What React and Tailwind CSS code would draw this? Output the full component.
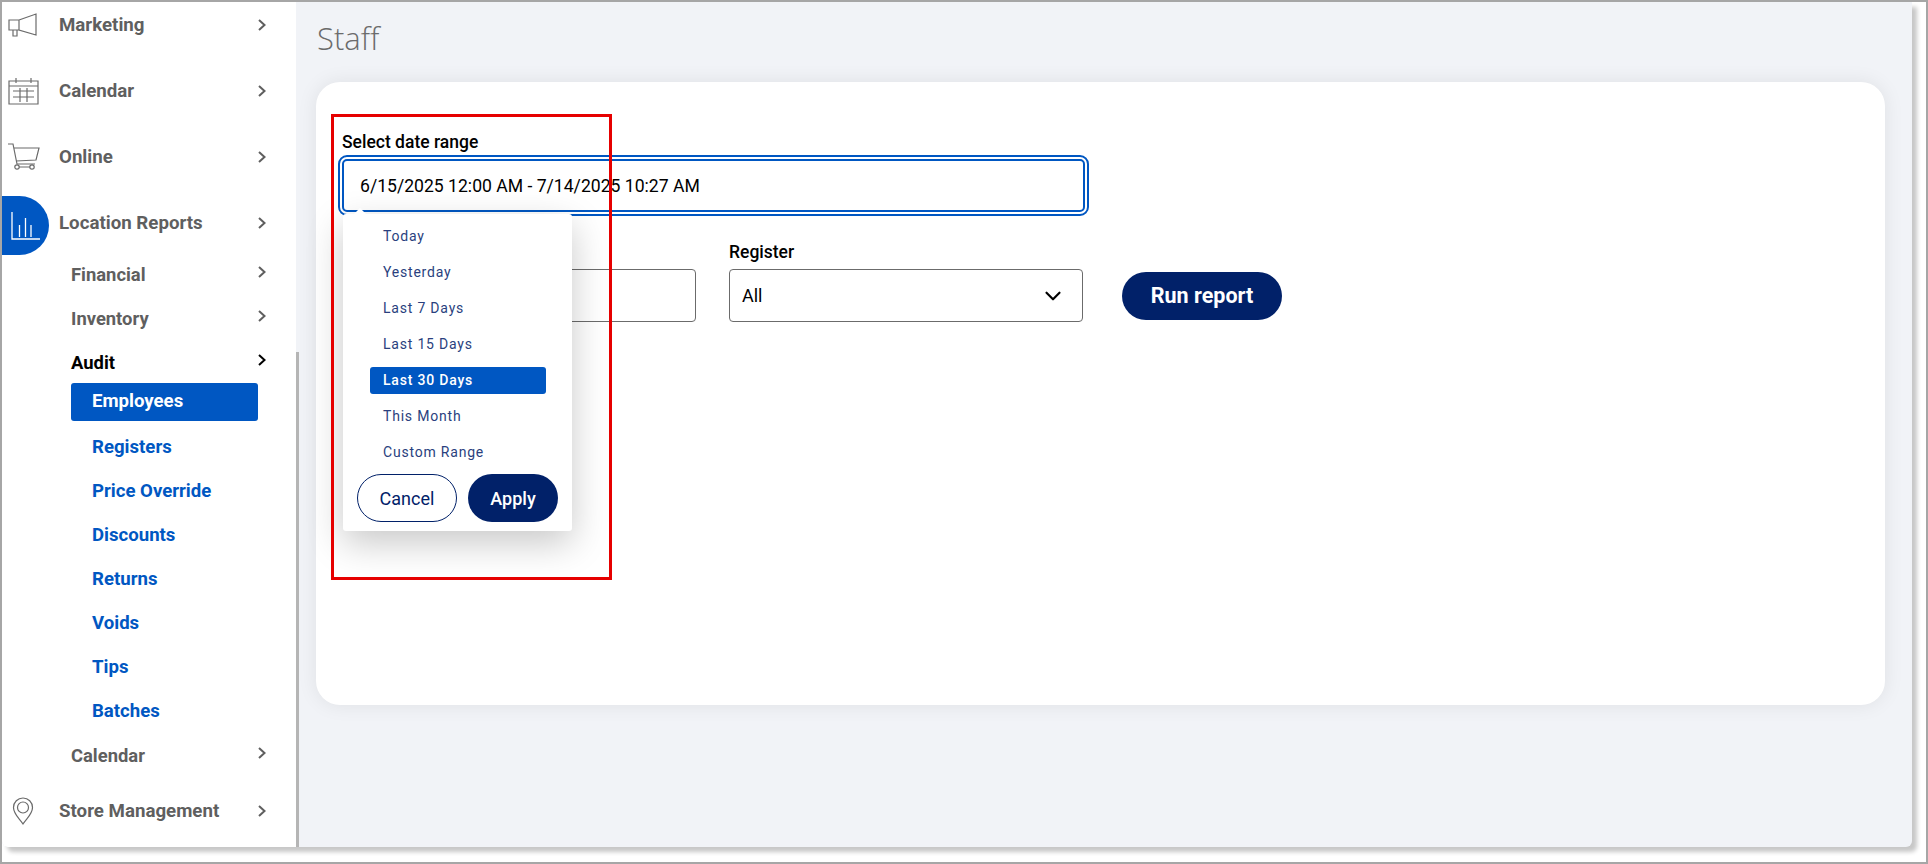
import { ChevronDown } from "lucide-react";

const Chevron = ({ className = "text-[#5f5f5f]" }) => (
  <svg width="10" height="14" viewBox="0 0 10 14" fill="none" className={className}>
    <path d="M2 2l5.500 5-5.500 5" stroke="currentColor" strokeWidth="2" />
  </svg>
);

const MegaphoneIcon = () => (
  <svg width="32" height="28" viewBox="0 0 32 28" fill="none" stroke="#6b6b6b" strokeWidth="1.2">
    <path d="M1 9h10v10H1zM11 9l17-6v21l-17-5zM5 19v6h4v-6" />
  </svg>
);

const CalendarIcon = () => (
  <svg width="32" height="28" viewBox="0 0 32 28" fill="none" stroke="#6b6b6b" strokeWidth="1.2">
    <path d="M1 4h29v23H1zM1 9h29M8 1v5M23 1v5M5 14h21M5 20h21M12 11v14M19 11v14" />
  </svg>
);

const CartIcon = () => (
  <svg width="32" height="28" viewBox="0 0 32 28" fill="none" stroke="#6b6b6b" strokeWidth="1.2">
    <path d="M0 1h5l4 20h18M6 5h25l-3 12-20 1" />
    <circle cx="9" cy="24" r="2.200" />
    <circle cx="24" cy="24" r="2.200" />
    <path d="M11 24h11" />
  </svg>
);

const ChartIcon = () => (
  <svg width="32" height="30" viewBox="0 0 32 30" fill="none" stroke="#fff" strokeWidth="1.3">
    <path d="M2 1v27h28M9.500 14v12M15.500 7v19M21 14v12" />
  </svg>
);

const PinIcon = () => (
  <svg width="22" height="28" viewBox="0 0 22 28" fill="none" stroke="#6b6b6b" strokeWidth="1.2" className="-ml-[3px]">
    <path d="M11 27C7 21 1.500 17 1.500 10.500a9.500 9.500 0 0 1 19 0C20.500 17 15 21 11 27z" />
    <circle cx="11" cy="10.500" r="5.500" />
  </svg>
);

const MainRow = ({ icon, label, active }) => (
  <div className="flex h-[66px] items-center pr-[29px]">
    <div
      className={`flex h-[59px] w-[47px] items-center justify-center rounded-r-full ${
        active ? "mt-[5px] bg-[#0057c2]" : "pr-[3px]"
      }`}
    >
      {icon}
    </div>
    <span className="ml-[10px] flex-1 text-[18.7px] font-bold text-[#5f5f5f]">{label}</span>
    <Chevron />
  </div>
);

const SubRow = ({ label, dark }) => (
  <div className="flex h-[44px] items-center pl-[69px] pr-[29px]">
    <span className={`flex-1 text-[18.4px] font-bold ${dark ? "text-black" : "text-[#5f5f5f]"}`}>{label}</span>
    <div className="mb-[6px]">
      <Chevron className={dark ? "text-black" : "text-[#5f5f5f]"} />
    </div>
  </div>
);

const ranges = ["Today", "Yesterday", "Last 7 Days", "Last 15 Days", "Last 30 Days", "This Month", "Custom Range"];
const auditLinks = ["Registers", "Price Override", "Discounts", "Returns", "Voids", "Tips", "Batches"];

const Sidebar = () => (
  <aside className="h-full w-[294px] shrink-0 overflow-hidden rounded-bl-[6px] bg-white">
    <div className="-mt-[10px]">
      <MainRow icon={<MegaphoneIcon />} label="Marketing" />
      <MainRow icon={<CalendarIcon />} label="Calendar" />
      <MainRow icon={<CartIcon />} label="Online" />
      <MainRow icon={<ChartIcon />} label="Location Reports" active />
      <div className="-mt-[3px]">
        <SubRow label="Financial" />
        <SubRow label="Inventory" />
        <SubRow label="Audit" dark />
      </div>
      <div className="-mt-[2px] ml-[69px] mb-[5px] flex h-[38px] w-[187px] items-center rounded-[3px] bg-[#0057c2] pl-[21px] text-[18.6px] font-bold text-white">
        Employees
      </div>
      {auditLinks.map((link) => (
        <div key={link} className="flex h-[44px] items-center pl-[90px] text-[18.6px] font-bold text-[#0057c2]">
          {link}
        </div>
      ))}
      <SubRow label="Calendar" />
      <MainRow icon={<PinIcon />} label="Store Management" />
    </div>
  </aside>
);

const DatePopup = () => (
  <div className="absolute left-[1px] top-[84px] z-10 h-[317px] w-[229px] rounded-[3px] bg-white pt-[4px] shadow-[0_12px_36px_rgba(0,0,0,0.22)]">
    <div className="absolute -top-[6px] left-[11px] h-0 w-0 border-x-[6px] border-b-[6px] border-x-transparent border-b-white" />
    <ul className="flex flex-col">
      {ranges.map((range) => (
        <li key={range} className="flex h-[36px] items-center pl-[40px]">
          {range === "Last 30 Days" ? (
            <span className="-ml-[13px] flex h-[27px] w-[176px] items-center rounded-[3px] bg-[#0057c2] pl-[13px] text-[14px] font-medium tracking-[0.8px] text-white">
              {range}
            </span>
          ) : (
            <span className="text-[14px] tracking-[0.8px] text-[#2a3f7e]">{range}</span>
          )}
        </li>
      ))}
    </ul>
    <div className="mt-[4px] flex gap-[11px] pl-[14px]">
      <button className="h-[48px] w-[100px] rounded-full border border-[#012169] text-[18px] text-[#012169]">Cancel</button>
      <button className="h-[48px] w-[90px] rounded-full bg-[#012169] text-[18px] font-medium text-white">Apply</button>
    </div>
  </div>
);

const fieldBox = "flex h-[53px] items-center justify-between rounded-[4px] border border-[#6b6b6b] pl-[12px] pr-[16px] text-[18px] text-black";

export default function App() {
  return (
    <div className="relative h-[864px] w-[1928px] overflow-hidden border-2 border-[#a6a6a6] bg-white font-['Roboto',sans-serif]">
      <div className="flex h-[845px] w-[1910px] overflow-hidden rounded-b-[6px] bg-[#f1f3f7] shadow-[5px_5px_4px_rgba(0,0,0,0.22)]">
        <Sidebar />
        <div className="flex w-[3px] shrink-0 flex-col pt-[350px]">
          <div className="flex-1 bg-[#b5b5b5]" />
        </div>
        <main className="min-w-0 flex-1 pl-[17px]">
          <h1 className="flex h-[80px] items-center pb-[8px] pl-[1px] font-['Open_Sans',sans-serif] text-[31px] font-light text-[#6b6b6b]">
            Staff
          </h1>
          <section className="h-[623px] w-[1569px] rounded-[24px] bg-white pl-[26px] pt-[48px] shadow-[0_0_20px_rgba(0,0,0,0.08)]">
            <div className="relative">
              <label className="mb-[5px] block text-[17.5px] font-medium leading-[24px] text-black">Select date range</label>
              <div className="h-[53px] w-[743px] rounded-[5px] border-2 border-[#0057c2] pl-[16px] text-[17.6px] leading-[51px] text-black outline-2 outline-offset-2 outline-[#0057c2]">
                6/15/2025 12:00 AM - 7/14/2025 10:27 AM
              </div>
              <DatePopup />
              <div className="mt-[28px] flex items-end">
                <div className={`${fieldBox} ml-[4px] w-[350px]`} />
                <div className="ml-[33px]">
                  <label className="mb-[5px] block text-[17.5px] font-medium leading-[24px] text-black">Register</label>
                  <div className={`${fieldBox} w-[354px]`}>
                    All
                    <ChevronDown size={26} strokeWidth={2} className="text-black" />
                  </div>
                </div>
                <button className="mb-[2px] ml-[39px] h-[48px] w-[160px] rounded-full bg-[#012169] text-[21.5px] font-bold text-white">
                  Run report
                </button>
              </div>
            </div>
          </section>
        </main>
      </div>
      <div className="absolute left-[329px] top-[112px] z-20 h-[466px] w-[281px] border-[3px] border-[#e60000]" />
    </div>
  );
}
